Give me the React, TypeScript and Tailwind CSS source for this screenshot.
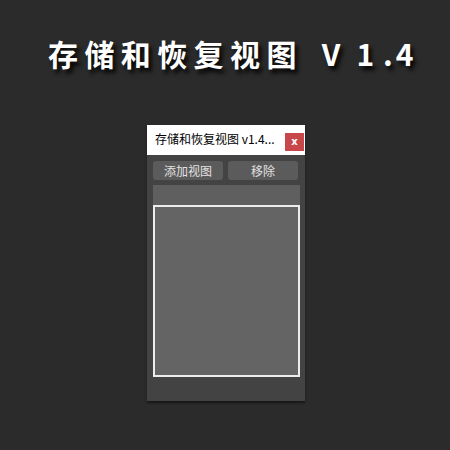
export default function App() {
  return (
    <div className="w-[450px] h-[450px] bg-[#2b2b2b] flex flex-col overflow-hidden font-['Noto_Sans_CJK_SC',sans-serif]">
      {/* Heading */}
      <div className="pt-[36px] pl-[48px] h-[125px]">
        <h1 className="flex items-baseline text-[30px] leading-[34px] font-bold text-white whitespace-nowrap [text-shadow:3px_4px_4px_rgba(0,0,0,0.95)]">
          <span className="tracking-[6.4px]">存储和恢复视图</span>
          <span className="ml-[19px]">V</span>
          <span className="ml-[16px]">1</span>
          <span className="ml-[9px]">.</span>
          <span className="ml-[3px]">4</span>
        </h1>
      </div>

      {/* Window */}
      <div className="ml-[147px] w-[158px] h-[276px] bg-[#434343] flex flex-col shadow-[0_2px_2px_rgba(0,0,0,0.5)]">
        <div className="h-[30px] bg-white flex items-start">
          <span className="pl-[8px] pt-[6px] text-[12px] leading-[16px] text-black whitespace-nowrap">
            存储和恢复视图 v1.4...
          </span>
          <div className="ml-auto mr-[1px] mt-[8px] w-[19px] h-[18px] bg-[#c8474b] flex items-center justify-center text-white text-[10px] leading-none font-bold font-['DejaVu_Sans',sans-serif]">
            x
          </div>
        </div>

        <div className="px-[6px] pt-[6px] flex flex-col">
          <div className="flex gap-[5px]">
            <button className="w-[70px] h-[19px] rounded-[3px] bg-[#5b5b5b] text-[#e2e2e2] text-[12px] leading-none flex items-center justify-center">
              添加视图
            </button>
            <button className="w-[70px] h-[19px] rounded-[3px] bg-[#5b5b5b] text-[#e2e2e2] text-[12px] leading-none flex items-center justify-center">
              移除
            </button>
          </div>
          <div className="mt-[5px] w-[147px] h-[20px] bg-[#5f5f5f]" />
          <div className="w-[147px] h-[172px] bg-[#646464] border-2 border-[#ececec]" />
        </div>
      </div>
    </div>
  );
}
